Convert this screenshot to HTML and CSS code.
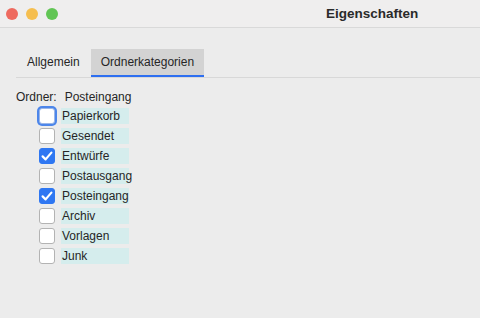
FILE: index.html
```html
<!DOCTYPE html>
<html>
<head>
<meta charset="utf-8">
<link rel="stylesheet" href="styles.css">
</head>
<body>
<div class="window">
  <div class="titlebar">
    <div class="lights">
      <span class="light red"></span>
      <span class="light yellow"></span>
      <span class="light green"></span>
    </div>
    <div class="title">Eigenschaften</div>
  </div>
  <div class="tabs">
    <div class="tab">Allgemein</div>
    <div class="tab active">Ordnerkategorien</div>
  </div>
  <div class="content">
    <div class="folder-row"><span class="folder-label">Ordner:</span><span class="folder-name">Posteingang</span></div>
    <div class="list">
      <div class="item"><span class="box focus"></span><span class="label">Papierkorb</span></div>
      <div class="item"><span class="box"></span><span class="label">Gesendet</span></div>
      <div class="item"><span class="box checked"><svg viewBox="0 0 16 16" width="16" height="16"><path d="M3.6 8.4 L6.6 11.4 L12.4 4.6" fill="none" stroke="#fff" stroke-width="2.2" stroke-linecap="round" stroke-linejoin="round"/></svg></span><span class="label">Entwürfe</span></div>
      <div class="item"><span class="box"></span><span class="label">Postausgang</span></div>
      <div class="item"><span class="box checked"><svg viewBox="0 0 16 16" width="16" height="16"><path d="M3.6 8.4 L6.6 11.4 L12.4 4.6" fill="none" stroke="#fff" stroke-width="2.2" stroke-linecap="round" stroke-linejoin="round"/></svg></span><span class="label">Posteingang</span></div>
      <div class="item"><span class="box"></span><span class="label">Archiv</span></div>
      <div class="item"><span class="box"></span><span class="label">Vorlagen</span></div>
      <div class="item"><span class="box"></span><span class="label">Junk</span></div>
    </div>
  </div>
</div>
</body>
</html>
```
FILE: styles.css
```css
html, body {
  margin: 0;
  padding: 0;
}
body {
  width: 480px;
  height: 318px;
  background: #ececec;
  font-family: "Liberation Sans", Arial, sans-serif;
  font-size: 12px;
  color: #262626;
  overflow: hidden;
}
.titlebar {
  height: 27px;
  background: #efeeee;
  border-bottom: 1px solid #d9d9d9;
  display: flex;
  align-items: center;
  padding-left: 6px;
}
.lights {
  display: flex;
  gap: 8px;
}
.light {
  width: 12px;
  height: 12px;
  border-radius: 50%;
  display: block;
}
.red { background: #ee6a5f; }
.yellow { background: #f5be4f; }
.green { background: #61c554; }
.title {
  margin-left: 268px;
  font-weight: bold;
  font-size: 13.5px;
  color: #2a2a2a;
}
.tabs {
  margin: 21px 0 0 16px;
  display: flex;
  border-bottom: 1px solid #d8d8d8;
  height: 28px;
}
.tab {
  padding: 0 11px;
  line-height: 26px;
  height: 26px;
  border-bottom: 2px solid transparent;
}
.tab.active {
  background: #d3d3d3;
  border-bottom-color: #2e6ff0;
  padding: 0 10px;
}
.content {
  padding: 11px 0 0 16px;
}
.folder-row {
  height: 16px;
  line-height: 16px;
  display: flex;
}
.folder-name {
  margin-left: 8px;
}
.list {
  margin-top: 3px;
  margin-left: 23px;
  display: flex;
  flex-direction: column;
  gap: 4px;
}
.item {
  display: flex;
  height: 16px;
  align-items: center;
}
.box {
  width: 14px;
  height: 14px;
  background: #fff;
  border: 1px solid #b3b3b3;
  border-radius: 3px;
  box-sizing: content-box;
  display: block;
  position: relative;
}
.box.focus {
  box-shadow: 0 0 0 2px #4d86ea;
  border-color: #9ab6e8;
}
.box.checked {
  background: #2f77f2;
  border-color: #2f77f2;
}
.box svg {
  position: absolute;
  left: -1px;
  top: -1px;
}
.label {
  margin-left: 6px;
  width: 67px;
  height: 16px;
  line-height: 16px;
  padding-left: 1px;
  background: #d5eded;
}
```
